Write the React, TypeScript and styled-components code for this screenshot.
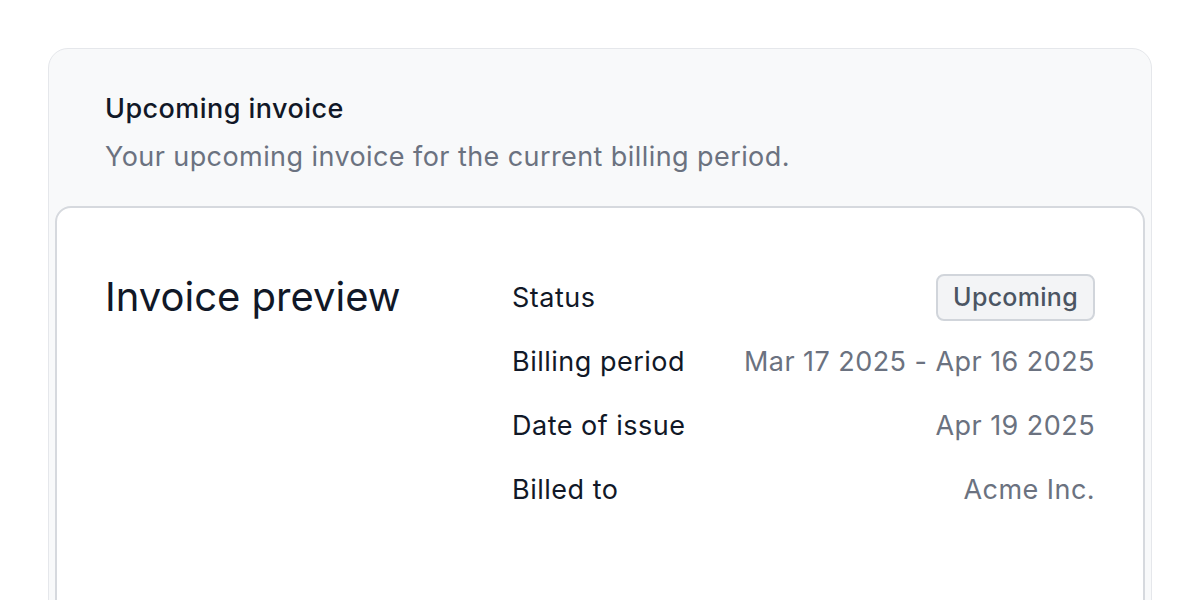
import styled, { createGlobalStyle } from "styled-components";

const GlobalStyle = createGlobalStyle`
    * {
        box-sizing: border-box;
    }
    body {
        margin: 0;
        background: #ffffff;
        font-family: Inter, "Noto Sans", sans-serif;
        color: #111827;
    }
`;

interface Row {
    label: string;
    value?: string;
    badge?: string;
}

const rows: Row[] = [
    { label: "Status", badge: "Upcoming" },
    { label: "Billing period", value: "Mar 17 2025 - Apr 16 2025" },
    { label: "Date of issue", value: "Apr 19 2025" },
    { label: "Billed to", value: "Acme Inc." },
];

export default function App() {
    return (
        <Page>
            <GlobalStyle />
            <OuterCard>
                <Header>
                    <Title>Upcoming invoice</Title>
                    <Subtitle>Your upcoming invoice for the current billing period.</Subtitle>
                </Header>
                <InnerCard>
                    <Heading>Invoice preview</Heading>
                    <DetailList>
                        {rows.map((row) => (
                            <DetailRow key={row.label}>
                                <Label>{row.label}</Label>
                                {row.badge ? <Badge>{row.badge}</Badge> : <Value>{row.value}</Value>}
                            </DetailRow>
                        ))}
                    </DetailList>
                </InnerCard>
            </OuterCard>
        </Page>
    );
}

const Page = styled.div`
    padding: 48px 48px 0 48px;
    height: 600px;
    overflow: hidden;
`;

const OuterCard = styled.section`
    background: #f8f9fa;
    border: 1px solid #e5e7eb;
    border-radius: 20px;
    padding: 0 6px 6px;
    min-height: 700px;
`;

const Header = styled.div`
    padding: 43px 50px 32px;
    display: flex;
    flex-direction: column;
    gap: 14px;
`;

const Title = styled.h2`
    margin: 0;
    font-size: 27px;
    line-height: 34px;
    letter-spacing: 0.45px;
    font-weight: 480;
    color: #111827;
`;

const Subtitle = styled.p`
    margin: 0;
    font-size: 27px;
    line-height: 34px;
    letter-spacing: 0.42px;
    color: #6b7280;
`;

const InnerCard = styled.div`
    background: #ffffff;
    border: 2px solid #d6d9de;
    border-radius: 16px;
    padding: 65px 48px 0 48px;
    min-height: 480px;
    display: grid;
    grid-template-columns: 407px 1fr;
`;

const Heading = styled.h1`
    margin: 0;
    font-size: 40px;
    line-height: 48px;
    font-weight: 400;
    color: #111827;
`;

const DetailList = styled.div`
    display: flex;
    flex-direction: column;
    gap: 16px;
`;

const DetailRow = styled.div`
    display: flex;
    align-items: center;
    justify-content: space-between;
    height: 48px;
`;

const Label = styled.span`
    font-size: 27px;
    letter-spacing: 0.5px;
    color: #111827;
`;

const Value = styled.span`
    font-size: 27px;
    letter-spacing: 0.45px;
    color: #6b7280;
`;

const Badge = styled.span`
    display: inline-flex;
    align-items: center;
    height: 47px;
    padding: 0 15px;
    border: 2px solid #d1d5db;
    border-radius: 8px;
    background: #f3f4f6;
    font-size: 25px;
    letter-spacing: 0.3px;
    font-weight: 450;
    color: #4b5563;
`;
